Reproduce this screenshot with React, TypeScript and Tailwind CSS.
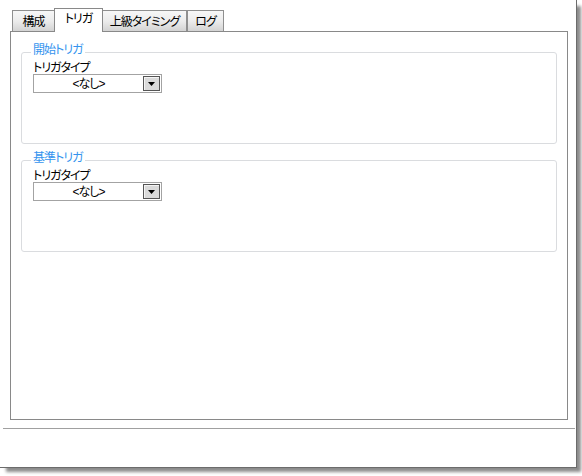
import React from 'react'

const tabs = [
  { label: '構成', w: 'w-[43px]' },
  { label: 'トリガ', w: 'w-[49px]', active: true },
  { label: '上級タイミング', w: 'w-[85px]' },
  { label: 'ログ', w: 'w-[37px]' },
]

function Tab({ label, w, active, afterActive }: { label: string; w: string; active?: boolean; afterActive?: boolean }) {
  if (active) {
    return (
      <div className={`${w} h-[24px] -mb-px -ml-px relative z-10 flex items-center justify-center pb-[3px] border border-b-0 border-[#898989] bg-white text-black`}>
        {label}
      </div>
    )
  }
  return (
    <div
      className={`${w} h-[21px] flex items-center justify-center pt-px border border-b-0 border-[#8f8f8f] bg-linear-to-b from-[#f7f7f7] via-[#ececec] to-[#d3d3d3] text-black ${afterActive ? '-ml-px' : ''}`}
    >
      {label}
    </div>
  )
}

function Dropdown() {
  return (
    <div className="w-[129px] h-[19px] border border-[#a3a3a3] bg-white flex items-center pr-px">
      <span className="flex-1 text-center leading-[14px]">&lt;なし&gt;</span>
      <div className="w-[17px] h-[15px] border border-[#555] bg-[#dadada] shadow-[inset_1px_1px_0_#f4f4f4] flex items-end justify-center pb-[4px]">
        <svg width="7" height="4" viewBox="0 0 7 4">
          <path d="M0 0h7L3.5 4z" fill="#000" />
        </svg>
      </div>
    </div>
  )
}

function GroupBox({ title, className = '' }: { title: string; className?: string }) {
  return (
    <fieldset className={`h-[101px] border border-[#dadcdf] rounded-[3px] ${className}`}>
      <legend className="ml-[9px] px-[2px] pb-[4px] leading-[14px] text-[#3594ee]">{title}</legend>
      <div className="pl-[11px]">
        <div className="leading-[13px] h-[13px] pt-px">トリガタイプ</div>
        <Dropdown />
      </div>
    </fieldset>
  )
}

export default function App() {
  return (
    <div
      className="w-[582px] h-[476px] bg-white text-[12px] tracking-[-1px] text-black font-['Liberation_Sans','Noto_Sans_CJK_JP',sans-serif] [font-feature-settings:'palt']"
    >
      <div className="w-[577px] h-[468px] bg-white border-r border-b border-[#6c6c6c] shadow-[5px_5px_3px_-1px_rgba(0,0,0,0.45)] flex flex-col">
        {/* Tabs */}
        <div className="pt-[8px] px-[10px]">
          <div className="flex items-end h-[23px] pl-[2px]">
            {tabs.map((t, i) => (
              <Tab key={t.label} label={t.label} w={t.w} active={t.active} afterActive={i === 2} />
            ))}
          </div>
          {/* Panel */}
          <div className="w-[558px] h-[389px] border border-[#898989] bg-white pt-[11px] px-[10px]">
            <GroupBox title="開始トリガ" />
            <GroupBox title="基準トリガ" className="mt-[7px]" />
          </div>
        </div>

        {/* Footer separator */}
        <div className="mt-[8px] ml-[3px] mr-px h-px bg-[#a0a0a0]" />
      </div>
    </div>
  )
}
